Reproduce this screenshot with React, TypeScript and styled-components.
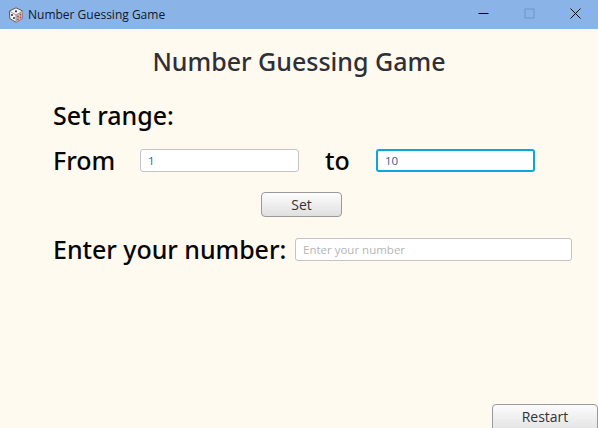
import React from 'react'
import styled, { createGlobalStyle } from 'styled-components';

const Global = createGlobalStyle`
    html, body {
        margin: 0;
        padding: 0;
        width: 598px;
        height: 428px;
        overflow: hidden;
        background: #fffaf0;
    }
`;

const DiceIcon = () => (
    <svg width="16" height="16" viewBox="0 0 16 16">
        <path d="M8 0.8 L14.6 4 L14.2 11.6 L8 15.2 L1.8 11.6 L1.4 4 Z" fill="#f4f2f2" stroke="#5f585c" strokeWidth="1" />
        <path d="M8 8 L14.6 4 L14.2 11.6 L8 15.2 Z" fill="#c9c2c4" />
        <path d="M8 8 L8 15.2" stroke="#8a8286" strokeWidth="0.8" />
        <path d="M1.4 4 L8 8 L14.6 4" fill="none" stroke="#8a8286" strokeWidth="0.8" />
        <circle cx="8" cy="4.3" r="1.1" fill="#3a3436" />
        <circle cx="4" cy="8" r="1.1" fill="#3a3436" />
        <circle cx="6" cy="11" r="1" fill="#3a3436" />
        <circle cx="10" cy="9.5" r="0.9" fill="#b5443f" />
        <circle cx="12.5" cy="7.5" r="0.9" fill="#b5443f" />
        <circle cx="10" cy="12.5" r="0.9" fill="#b5443f" />
        <circle cx="12.5" cy="10.5" r="0.9" fill="#b5443f" />
    </svg>
);

const App = () => {
    return (
        <Window>
            <Global />
            <TitleBar>
                <AppIcon><DiceIcon /></AppIcon>
                <WindowTitle>Number Guessing Game</WindowTitle>
                <WindowButtons>
                    <WindowButton>
                        <svg width="11" height="11" viewBox="0 0 11 11">
                            <path d="M0.5 5.5 H10.5" stroke="#000" strokeWidth="1" />
                        </svg>
                    </WindowButton>
                    <WindowButton>
                        <svg width="11" height="11" viewBox="0 0 11 11">
                            <rect x="1" y="1" width="9" height="9" fill="none" stroke="#6f96c6" strokeWidth="1" />
                        </svg>
                    </WindowButton>
                    <WindowButton>
                        <svg width="11" height="11" viewBox="0 0 11 11">
                            <path d="M0.5 0.5 L10.5 10.5 M10.5 0.5 L0.5 10.5" stroke="#000" strokeWidth="1" />
                        </svg>
                    </WindowButton>
                </WindowButtons>
            </TitleBar>
            <Content>
                <Heading>Number Guessing Game</Heading>
                <Label>Set range:</Label>
                <RangeRow>
                    <FromLabel>From</FromLabel>
                    <TextBox readOnly value="1" $width={159} />
                    <ToLabel>to</ToLabel>
                    <TextBox readOnly value="10" $width={159} $focused />
                </RangeRow>
                <SetRow>
                    <PushButton $width={81}>Set</PushButton>
                </SetRow>
                <GuessRow>
                    <GuessLabel>Enter your number:</GuessLabel>
                    <TextBox readOnly placeholder="Enter your number" $width={277} />
                </GuessRow>
            </Content>
            <Footer>
                <RestartButton $width={106}>Restart</RestartButton>
            </Footer>
        </Window>
    )
}

export default App;

const Window = styled.div`
    width: 598px;
    height: 428px;
    display: flex;
    flex-direction: column;
    overflow: hidden;
    background-color: #fffaf0;
    font-family: "Open Sans", "Noto Sans", sans-serif;
`;
const TitleBar = styled.div`
    height: 29px;
    flex-shrink: 0;
    background-color: #8ab4e8;
    display: flex;
    align-items: center;
    padding-left: 8px;
`;
const AppIcon = styled.div`
    width: 16px;
    height: 16px;
    display: flex;
`;
const WindowTitle = styled.div`
    margin-left: 4px;
    font-size: 12px;
    color: #10182a;
    white-space: nowrap;
`;
const WindowButtons = styled.div`
    margin-left: auto;
    display: flex;
`;
const WindowButton = styled.div`
    width: 46px;
    height: 29px;
    display: flex;
    align-items: center;
    justify-content: center;
    margin-top: -2px;
`;
const Content = styled.div`
    flex: 1;
    display: flex;
    flex-direction: column;
    padding-left: 53px;
    padding-top: 14px;
`;
const Heading = styled.div`
    margin-left: -53px;
    text-align: center;
    font-family: "Noto Sans", "Open Sans", sans-serif;
    font-size: 25px;
    font-weight: 500;
    line-height: 36px;
    color: #2f2f36;
    margin-bottom: 18px;
`;
const Label = styled.div`
    font-family: "Noto Sans", "Open Sans", sans-serif;
    font-size: 25px;
    font-weight: 500;
    line-height: 36px;
    color: #050505;
    white-space: nowrap;
`;
const FromLabel = styled(Label)`
    width: 87px;
`;
const ToLabel = styled(Label)`
    width: 25px;
    margin: 0 26px;
`;
const GuessLabel = styled(Label)`
    width: 233px;
    letter-spacing: -0.05px;
    margin-bottom: 1px;
`;
const RangeRow = styled.div`
    display: flex;
    align-items: center;
    margin-top: 9px;
`;
const TextBox = styled.input<{ $width: number; $focused?: boolean }>`
    box-sizing: border-box;
    width: ${p => p.$width}px;
    height: 23px;
    padding: 0 7px;
    outline: none;
    border: ${p => p.$focused ? '2px solid #0ba6e0' : '1px solid #c4c4c4'};
    border-radius: 3px;
    background-color: #fff;
    font-family: "Open Sans", "Noto Sans", sans-serif;
    font-size: 11.5px;
    color: #2f5f8f;
    &::placeholder {
        color: #b5b5b5;
        opacity: 1;
    }
`;
const SetRow = styled.div`
    display: flex;
    padding-left: 208px;
    margin-top: 14px;
`;
const PushButton = styled.button<{ $width: number }>`
    box-sizing: border-box;
    width: ${p => p.$width}px;
    height: 25px;
    padding: 0;
    border: 1px solid #9a9a9a;
    border-radius: 4px;
    background: linear-gradient(#fcfcfc, #eeeeee 50%, #e0e0e0);
    font-family: "Open Sans", "Noto Sans", sans-serif;
    font-size: 14px;
    color: #333;
`;
const GuessRow = styled.div`
    display: flex;
    align-items: center;
    gap: 9px;
    margin-top: 14px;
`;
const Footer = styled.div`
    height: 24px;
    flex-shrink: 0;
    display: flex;
    justify-content: flex-end;
    overflow: hidden;
`;
const RestartButton = styled(PushButton)`
    height: 30px;
    padding-bottom: 6px;
`;
